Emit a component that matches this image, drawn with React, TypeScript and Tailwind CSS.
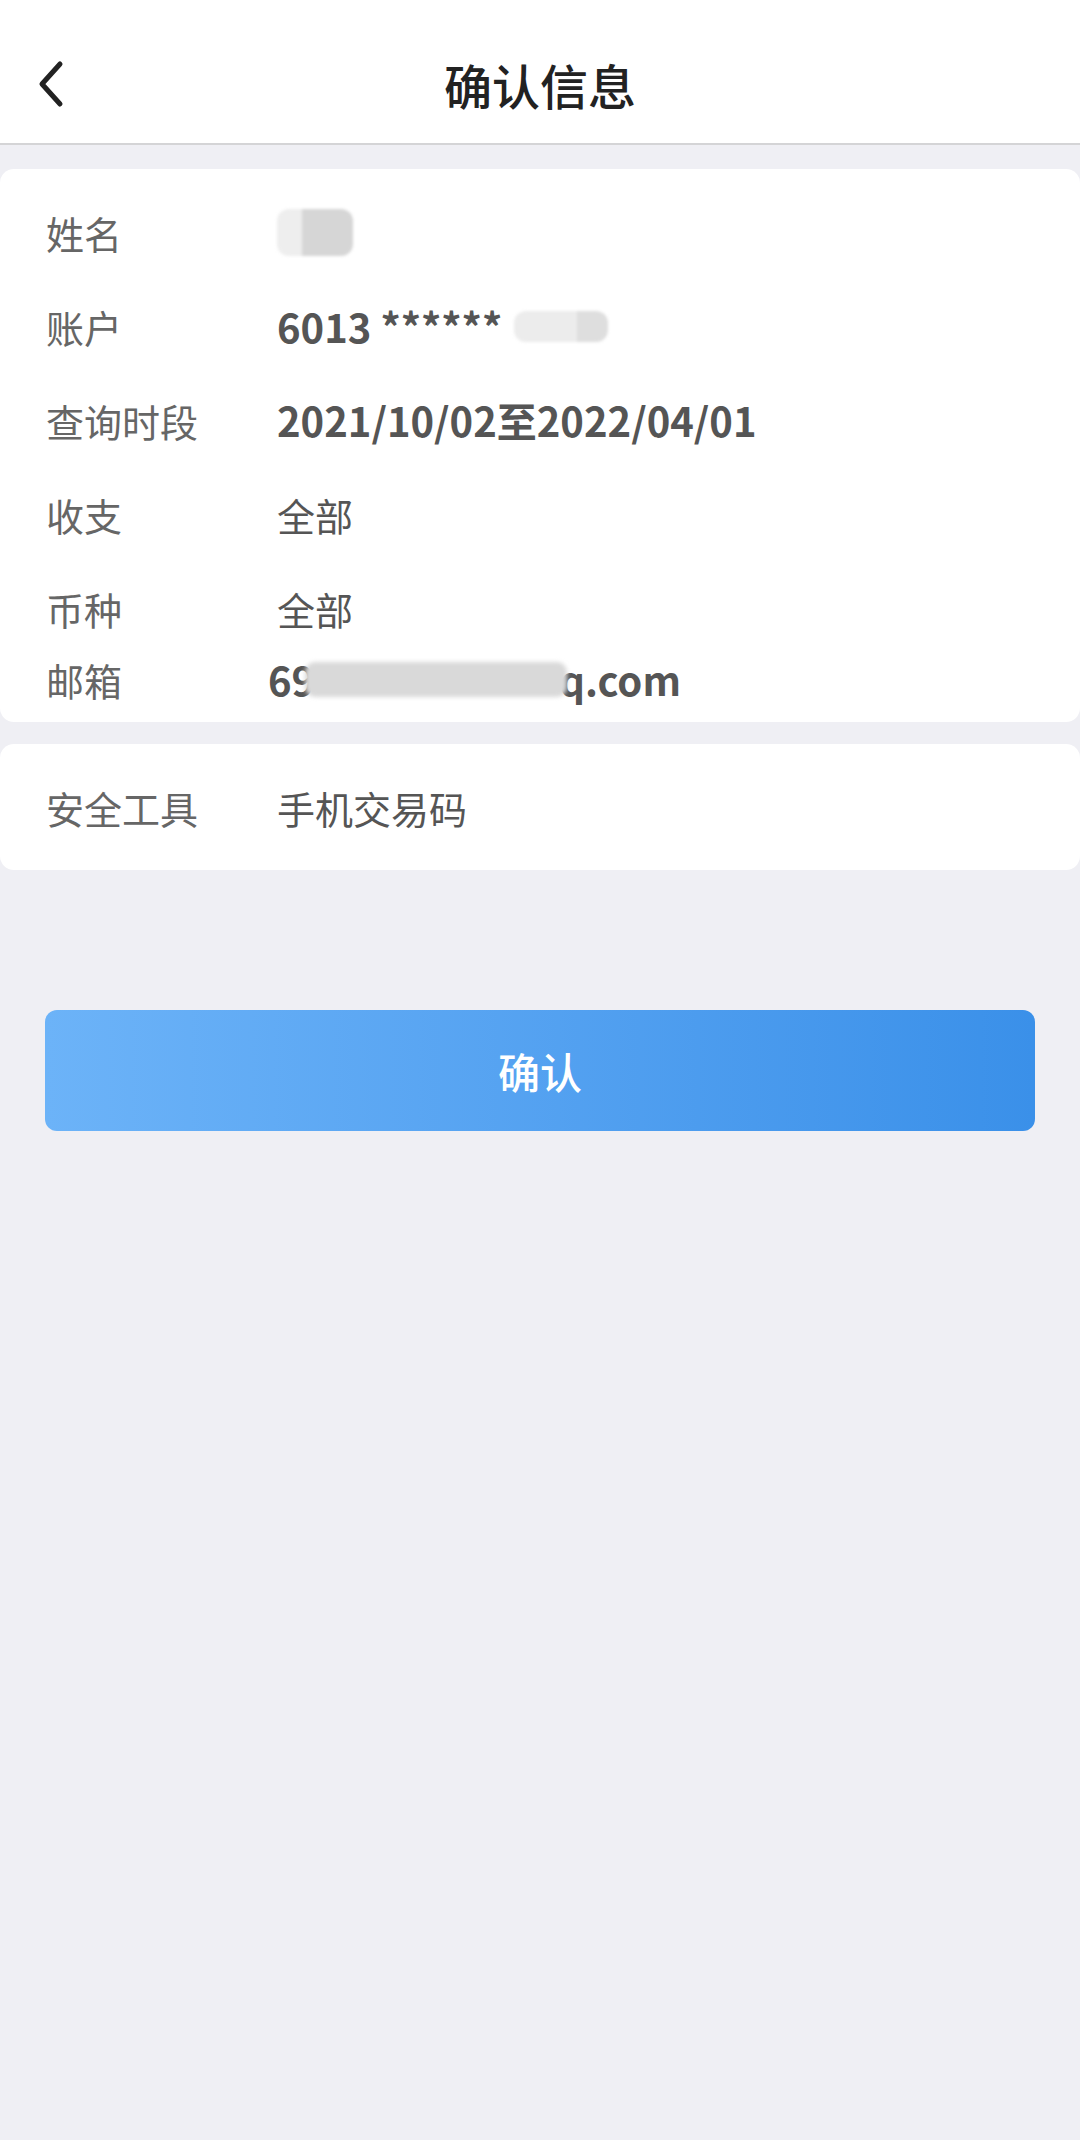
import React from "react";

const font = { fontFamily: '"Noto Sans CJK SC", "Noto Sans", sans-serif' };

function Blur({ className }: { className: string }) {
  return <span className={`inline-block rounded-[10px] blur-[2px] ${className}`} />;
}

function Row({ label, children, h = "h-[94px]" }: { label: string; children: React.ReactNode; h?: string }) {
  return (
    <div className={`flex items-center ${h}`}>
      <div className="w-[277px] shrink-0 pl-[46px] text-[38px] text-[#666666]">{label}</div>
      <div className="flex items-center text-[38px] text-[#555555]">{children}</div>
    </div>
  );
}

export default function App() {
  return (
    <div className="min-h-[2140px] w-[1080px] bg-[#efeff4]" style={font}>
      {/* Header */}
      <header className="relative flex h-[145px] items-center justify-center border-b-2 border-[#d4d4d6] bg-white pt-[25px]">
        <svg className="absolute left-[36px] top-[60px]" width="30" height="48" viewBox="0 0 30 48" fill="none">
          <path d="M24 4 L6 24 L24 44" stroke="#222" strokeWidth="5" strokeLinecap="round" strokeLinejoin="round" />
        </svg>
        <h1 className="text-[48px] font-medium text-[#222222]">确认信息</h1>
      </header>

      {/* Info card */}
      <section className="mt-[24px] rounded-[14px] bg-white pb-[19px] pt-[16px]">
        <Row label="姓名">
          <span className="flex h-[47px] w-[76px] overflow-hidden rounded-[12px] blur-[1.5px]">
            <span className="w-1/3 bg-[#eeeeee]" />
            <span className="w-2/3 bg-[#d6d6d6]" />
          </span>
        </Row>
        <Row label="账户">
          <span className="text-[40px] font-bold">6013 ******</span>
          <span className="ml-[12px] flex h-[31px] w-[94px] overflow-hidden rounded-[12px] blur-[1.5px]">
            <span className="w-2/3 bg-[#ececec]" />
            <span className="w-1/3 bg-[#dedede]" />
          </span>
        </Row>
        <Row label="查询时段">
          <span className="text-[40px] font-bold">2021/10/02至2022/04/01</span>
        </Row>
        <Row label="收支">全部</Row>
        <Row label="币种">全部</Row>
        <Row label="邮箱" h="h-[48px]">
          <span className="-ml-[9px] text-[40px] font-bold">69</span>
          <Blur className="-ml-[10px] h-[35px] w-[262px] bg-[#d9d9d9]" />
          <span className="-ml-[8px] text-[40px] font-bold">q.com</span>
        </Row>
      </section>

      {/* Security card */}
      <section className="mt-[22px] flex h-[126px] items-center rounded-[14px] bg-white">
        <div className="w-[277px] shrink-0 pl-[46px] text-[38px] text-[#666666]">安全工具</div>
        <div className="text-[38px] text-[#555555]">手机交易码</div>
      </section>

      {/* Confirm button */}
      <div className="px-[45px] pt-[140px]">
        <button className="flex h-[121px] w-full items-center justify-center rounded-[12px] bg-gradient-to-r from-[#6cb3f8] to-[#3a90e9] text-[42px] font-medium text-white">
          确认
        </button>
      </div>
    </div>
  );
}
